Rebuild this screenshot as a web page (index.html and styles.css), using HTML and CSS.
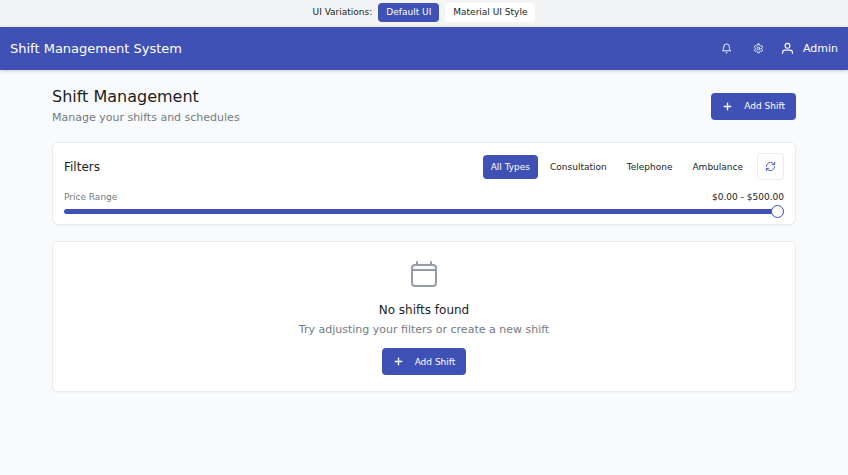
FILE: index.html
```html
<!DOCTYPE html>
<html lang="en">
<head>
<meta charset="utf-8">
<meta name="viewport" content="width=device-width, initial-scale=1">
<title>Shift Management System</title>
<link rel="stylesheet" href="styles.css">
</head>
<body>
<nav class="variations" aria-label="UI variations">
  <span>UI Variations:</span>
  <button type="button" class="chip chip-active">Default UI</button>
  <button type="button" class="chip">Material UI Style</button>
</nav>
<header class="appbar">
  <div class="brand">Shift Management System</div>
  <div class="actions">
    <button type="button" class="icon-button" aria-label="Notifications">
      <svg class="icon" viewBox="0 0 24 24"><path d="M6 8a6 6 0 0 1 12 0c0 7 3 9 3 9H3s3-2 3-9"/><path d="M10.3 21a1.94 1.94 0 0 0 3.4 0"/></svg>
    </button>
    <button type="button" class="icon-button" aria-label="Settings">
      <svg class="icon" viewBox="0 0 24 24"><path d="M12.22 2h-.44a2 2 0 0 0-2 2v.18a2 2 0 0 1-1 1.73l-.43.25a2 2 0 0 1-2 0l-.15-.08a2 2 0 0 0-2.73.73l-.22.38a2 2 0 0 0 .73 2.73l.15.1a2 2 0 0 1 1 1.72v.51a2 2 0 0 1-1 1.74l-.15.09a2 2 0 0 0-.73 2.73l.22.38a2 2 0 0 0 2.73.73l.15-.08a2 2 0 0 1 2 0l.43.25a2 2 0 0 1 1 1.73V20a2 2 0 0 0 2 2h.44a2 2 0 0 0 2-2v-.18a2 2 0 0 1 1-1.73l.43-.25a2 2 0 0 1 2 0l.15.08a2 2 0 0 0 2.73-.73l.22-.39a2 2 0 0 0-.73-2.73l-.15-.08a2 2 0 0 1-1-1.74v-.5a2 2 0 0 1 1-1.74l.15-.09a2 2 0 0 0 .73-2.73l-.22-.38a2 2 0 0 0-2.73-.73l-.15.08a2 2 0 0 1-2 0l-.43-.25a2 2 0 0 1-1-1.73V4a2 2 0 0 0-2-2z"/><circle cx="12" cy="12" r="3"/></svg>
    </button>
    <button type="button" class="user">
      <svg class="icon icon-user" viewBox="0 0 24 24"><path d="M21 21v-2a4 4 0 0 0-4-4H7a4 4 0 0 0-4 4v2"/><circle cx="12" cy="7" r="4.5"/></svg>
      Admin
    </button>
  </div>
</header>
<main class="page">
  <div class="page-head">
    <div>
      <h1>Shift Management</h1>
      <p class="muted">Manage your shifts and schedules</p>
    </div>
    <button type="button" class="primary">
      <svg class="icon icon-plus" viewBox="0 0 24 24"><path d="M5 12h14M12 5v14"/></svg>
      Add Shift
    </button>
  </div>
  <section class="card filters">
    <div class="row">
      <h2>Filters</h2>
      <div class="types">
        <button type="button" class="type type-active">All Types</button>
        <button type="button" class="type">Consultation</button>
        <button type="button" class="type">Telephone</button>
        <button type="button" class="type">Ambulance</button>
        <button type="button" class="refresh" aria-label="Refresh">
          <svg class="icon" viewBox="0 0 24 24"><path d="M3 12a9 9 0 0 1 9-9 9.75 9.75 0 0 1 6.74 2.74L21 8"/><path d="M21 3v5h-5"/><path d="M21 12a9 9 0 0 1-9 9 9.75 9.75 0 0 1-6.74-2.74L3 16"/><path d="M8 16H3v5"/></svg>
        </button>
      </div>
    </div>
    <div class="row price">
      <label for="price">Price Range</label>
      <output for="price">$0.00 - $500.00</output>
    </div>
    <input class="slider" id="price" type="range" min="0" max="500" value="500">
  </section>
  <section class="card empty">
    <svg class="icon icon-calendar" viewBox="0 0 32 32"><rect x="4" y="6" width="24" height="21" rx="3"/><path d="M4 11h24M9 3v3M23 3v3"/></svg>
    <h2>No shifts found</h2>
    <p class="muted">Try adjusting your filters or create a new shift</p>
    <button type="button" class="primary">
      <svg class="icon icon-plus" viewBox="0 0 24 24"><path d="M5 12h14M12 5v14"/></svg>
      Add Shift
    </button>
  </section>
</main>
</body>
</html>
```
FILE: styles.css
```css
:root {
  --primary: #3f51b5;
  --text: #1b1e24;
  --muted: #737a84;
  --line: #e8ebef;
}

* {
  box-sizing: border-box;
}

body {
  margin: 0;
  min-height: 100vh;
  background: #f8fafc;
  color: var(--text);
  font-family: "DejaVu Sans", sans-serif;
  font-size: 9px;
}

button {
  display: inline-flex;
  align-items: center;
  justify-content: center;
  border: 0;
  padding: 0;
  background: none;
  color: inherit;
  font: inherit;
  white-space: nowrap;
}

h1,
h2,
p {
  margin: 0;
  font-weight: 400;
}

.icon {
  width: 11px;
  height: 11px;
  fill: none;
  stroke: currentColor;
  stroke-width: 2;
  stroke-linecap: round;
  stroke-linejoin: round;
}

.icon-plus {
  stroke-width: 3;
}

.variations {
  display: flex;
  align-items: flex-start;
  justify-content: center;
  gap: 6px;
  height: 27px;
  padding-top: 3px;
  background: #f3f4f6;
  line-height: 19px;
}

.chip {
  height: 19px;
  padding: 0 8px;
  border-radius: 4px;
  background: #fff;
}

.chip-active {
  background: var(--primary);
  color: #fff;
}

.appbar {
  display: flex;
  align-items: center;
  justify-content: space-between;
  height: 43px;
  padding: 0 10px;
  background: var(--primary);
  color: #fff;
  box-shadow: 0 1px 4px rgba(0, 0, 0, 0.2);
}

.brand {
  font-size: 13px;
}

.actions {
  display: flex;
  align-items: center;
  gap: 5px;
}

.icon-button {
  width: 27px;
  height: 27px;
}

.user {
  gap: 9px;
  padding-left: 4px;
  font-size: 11px;
}

.icon-user {
  width: 13px;
  height: 13px;
}

.page {
  display: flex;
  flex-direction: column;
  gap: 16px;
  max-width: 848px;
  margin: 0 auto;
  padding: 16px 52px;
}

.page-head,
.row {
  display: flex;
  align-items: center;
  justify-content: space-between;
}

.page-head {
  height: 40px;
}

h1 {
  font-size: 16px;
  line-height: 24px;
}

.muted {
  color: var(--muted);
  font-size: 11px;
  line-height: 18px;
}

.primary {
  height: 27px;
  gap: 11px;
  padding: 0 11px;
  border-radius: 4px;
  background: var(--primary);
  color: #fff;
}

.card {
  border: 1px solid var(--line);
  border-radius: 6px;
  background: #fff;
  box-shadow: 0 1px 1px rgba(0, 0, 0, 0.03);
}

.card h2 {
  font-size: 12px;
}

.filters {
  padding: 10px 11px 6px;
}

.types {
  display: flex;
  align-items: center;
  gap: 4px;
}

.type {
  height: 24px;
  padding: 0 8px;
  border-radius: 4px;
}

.type-active {
  background: var(--primary);
  color: #fff;
}

.refresh {
  width: 27px;
  height: 27px;
  margin-left: 2px;
  border: 1px solid var(--line);
  border-radius: 4px;
  color: var(--primary);
}

.price {
  margin-top: 11px;
  line-height: 13px;
}

.price label {
  color: var(--muted);
}

.slider {
  display: block;
  width: 100%;
  height: 13px;
  margin: 1px 0 0;
  background: none;
  appearance: none;
}

.slider::-webkit-slider-runnable-track {
  height: 5px;
  border-radius: 3px;
  background: var(--primary);
}

.slider::-webkit-slider-thumb {
  width: 13px;
  height: 13px;
  margin-top: -4px;
  border: 1px solid var(--primary);
  border-radius: 50%;
  background: #fff;
  appearance: none;
}

.empty {
  display: flex;
  flex-direction: column;
  align-items: center;
  padding: 17px 16px 16px;
}

.empty h2 {
  margin-top: 8px;
  line-height: 22px;
}

.empty .primary {
  margin-top: 9px;
}

.icon-calendar {
  width: 32px;
  height: 32px;
  color: #959ca5;
}
```
